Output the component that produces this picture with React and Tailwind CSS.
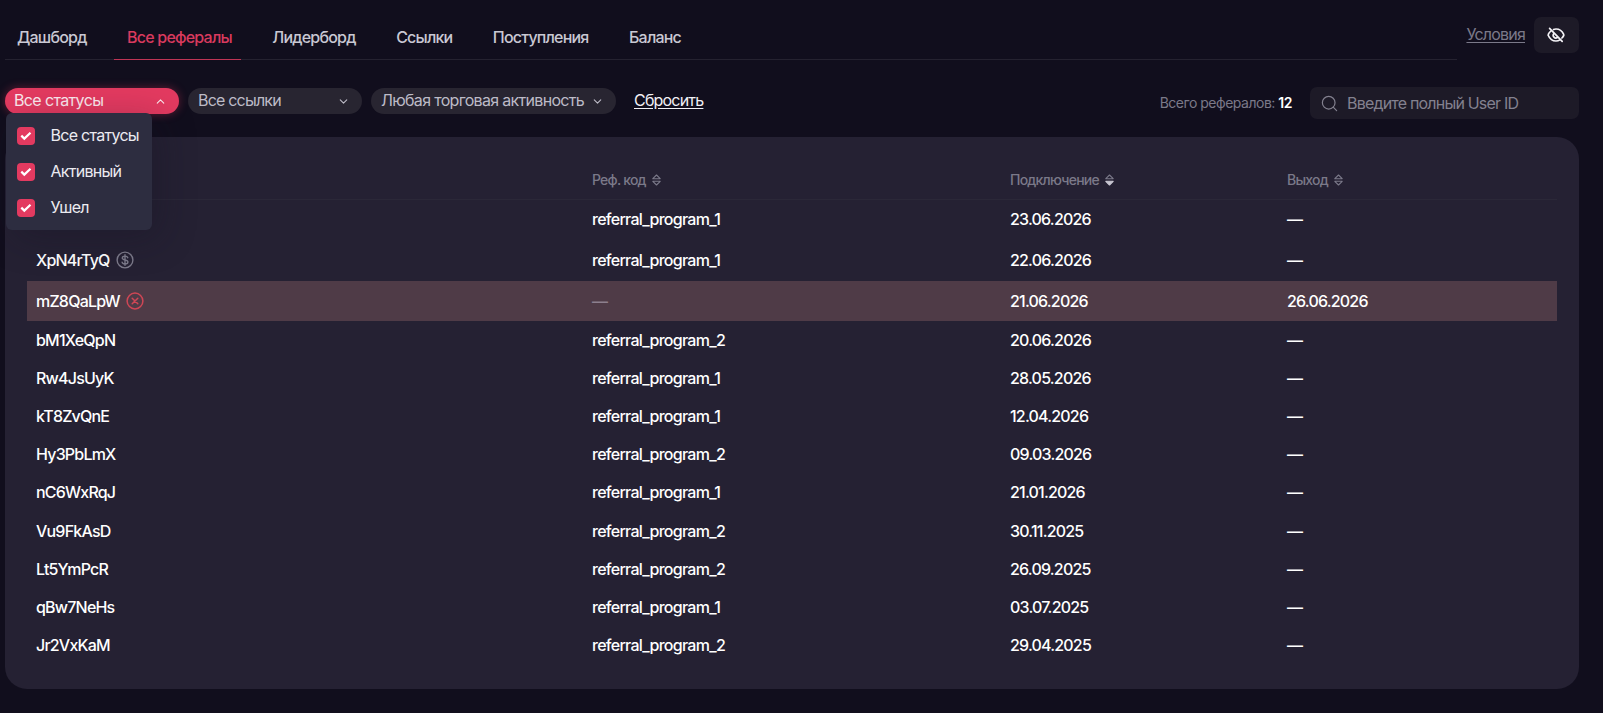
import { ChevronDown, ChevronUp, Search } from "lucide-react";

const tabs = ["Дашборд", "Все рефералы", "Лидерборд", "Ссылки", "Поступления", "Баланс"];

const statuses = ["Все статусы", "Активный", "Ушел"];

const referrals = [
  { id: "", code: "referral_program_1", joined: "23.06.2026", left: null },
  { id: "XpN4rTyQ", code: "referral_program_1", joined: "22.06.2026", left: null, icon: "dollar" },
  { id: "mZ8QaLpW", code: null, joined: "21.06.2026", left: "26.06.2026", icon: "left" },
  { id: "bM1XeQpN", code: "referral_program_2", joined: "20.06.2026", left: null },
  { id: "Rw4JsUyK", code: "referral_program_1", joined: "28.05.2026", left: null },
  { id: "kT8ZvQnE", code: "referral_program_1", joined: "12.04.2026", left: null },
  { id: "Hy3PbLmX", code: "referral_program_2", joined: "09.03.2026", left: null },
  { id: "nC6WxRqJ", code: "referral_program_1", joined: "21.01.2026", left: null },
  { id: "Vu9FkAsD", code: "referral_program_2", joined: "30.11.2025", left: null },
  { id: "Lt5YmPcR", code: "referral_program_2", joined: "26.09.2025", left: null },
  { id: "qBw7NeHs", code: "referral_program_1", joined: "03.07.2025", left: null },
  { id: "Jr2VxKaM", code: "referral_program_2", joined: "29.04.2025", left: null },
];

function SortIcon({ active }) {
  return (
    <svg width="9" height="12" viewBox="0 0 9 12" fill="none" stroke="currentColor" strokeWidth="1.1" strokeLinejoin="round">
      <path d="M4.500 1 8.200 4.700H.8z" />
      <path d="M4.500 11 .8 7.300h7.400z" className={active ? "fill-[#c9c7d2] stroke-[#c9c7d2]" : ""} />
    </svg>
  );
}

function DollarIcon() {
  return (
    <svg width="18" height="18" viewBox="0 0 18 18" fill="none" stroke="#7d7b8b" strokeWidth="1.4" strokeLinecap="round">
      <circle cx="9" cy="9" r="7.9" />
      <path d="M9 3.8v10.4M11.8 6.7c-.3-1-1.3-1.6-2.8-1.6-1.6 0-2.7.7-2.7 1.9 0 2.7 5.6 1.2 5.6 4 0 1.2-1.2 1.9-2.9 1.900-1.600 0-2.700-.7-2.900-1.800" />
    </svg>
  );
}

function LeftIcon() {
  return (
    <svg width="18" height="18" viewBox="0 0 18 18" fill="none" stroke="#cf4655" strokeWidth="1.5" strokeLinecap="round">
      <circle cx="9" cy="9" r="7.9" />
      <path d="m6.200 6.200 5.600 5.600M11.800 6.200l-5.600 5.600" />
    </svg>
  );
}

function EyeOffIcon() {
  return (
    <svg width="18" height="16" viewBox="0 0 18 16" fill="none" stroke="#f4f3f7" strokeWidth="1.7" strokeLinecap="round" strokeLinejoin="round">
      <path d="M6.500 2.500C7.300 2.200 8.100 2 9 2c4 0 6.700 3.200 7.700 5.400.2.400.2.700 0 1.100-.4.800-1 1.700-1.800 2.500" />
      <path d="M3.800 4.200C2.500 5.200 1.700 6.400 1.300 7.400c-.2.400-.2.700 0 1.100C2.300 10.800 5 14 9 14c1.500 0 2.800-.4 3.900-1.100" />
      <path d="M6.700 6.700A2.700 2.700 0 0 0 10.400 10.500" />
      <path d="m2.600 1.400 12.600 13" />
    </svg>
  );
}

function Filter({ label, open, className }) {
  const Icon = open ? ChevronUp : ChevronDown;
  return (
    <button
      className={`flex h-[26px] items-center justify-between rounded-full pr-[12px] ${
        open
          ? "bg-[#e33a60] pl-[9px] text-[#fbe9ee] shadow-[0_0_10px_rgba(227,58,96,0.4)]"
          : "bg-[#282531] pl-[10px] text-[#bdbbc7]"
      } ${className}`}
    >
      <span className="pb-0.5">{label}</span>
      <Icon size={13} strokeWidth={2} />
    </button>
  );
}

function StatusMenu() {
  return (
    <div className="absolute left-px top-[25px] z-10 flex h-[117px] w-[146px] flex-col rounded-[6px] bg-[#2d2d40] pl-[11px] pt-[5px] shadow-[8px_8px_36px_rgba(20,16,34,0.3)]">
      {statuses.map((status) => (
        <label key={status} className="flex h-9 items-center gap-[15.500px] text-[#ecebf1]">
          <span className="flex size-[18px] items-center justify-center rounded-[4px] bg-[#e33a60]">
            <svg width="12" height="10" viewBox="0 0 12 10" fill="none" stroke="#fff" strokeWidth="2.200">
              <path d="m1.300 4.600 3 3L10.500 1.700" />
            </svg>
          </span>
          <span className="pb-0.5 tracking-[-0.045em]">{status}</span>
        </label>
      ))}
    </div>
  );
}

function App() {
  return (
    <div className="h-[713px] overflow-hidden bg-[#110e1d] pl-[5px] pr-6 font-['Inter',sans-serif] text-base tracking-[-0.05em] text-white">
      <div className="flex h-[60px] items-start justify-between">
        <nav className="flex h-[60px] w-[1452px] gap-[18.500px] border-b border-[#252230]">
          {tabs.map((tab) => (
            <div
              key={tab}
              className={`-mb-px flex items-center border-b pl-[13px] pr-[9px] pt-3.5 font-medium first:pl-[12px] ${
                tab === "Все рефералы" ? "border-[#c03455] text-[#d93a5e]" : "border-transparent text-[#c9c8d3]"
              }`}
            >
              {tab}
            </div>
          ))}
        </nav>
        <div className="flex items-center gap-[9px] pt-[17px]">
          <a className="-ml-4 pb-0.5 text-[#7b7989] underline underline-offset-2">Условия</a>
          <button className="flex h-9 w-[45px] items-center justify-center rounded-[7px] bg-[#1d1a27] pr-px">
            <EyeOffIcon />
          </button>
        </div>
      </div>

      <div className="mt-[27px] flex h-8 justify-between">
        <div className="flex items-start gap-[9px] pt-px">
          <div className="relative">
            <Filter label="Все статусы" open className="w-[174px] tracking-[-0.04em]" />
            <StatusMenu />
          </div>
          <Filter label="Все ссылки" className="w-[174px]" />
          <Filter label="Любая торговая активность" className="w-[245px] tracking-[-0.043em]" />
          <a className="ml-[9px] leading-[25px] text-[#f1f0f5] underline underline-offset-2">Сбросить</a>
        </div>
        <div className="flex items-center">
          <p className="mr-[18px] text-sm tracking-[-0.035em] text-[#7b7989]">
            Всего рефералов: <span className="font-semibold text-white">12</span>
          </p>
          <div className="flex h-8 w-[269px] items-center gap-[8px] rounded-[7px] bg-[#1d1a27] pl-[10px] text-[#83818f]">
            <Search size={19} strokeWidth={1.500} />
            <span className="pb-px">Введите полный User ID</span>
          </div>
        </div>
      </div>

      <div className="mt-[18px] h-[552px] rounded-[22px] bg-[#252133] px-[22px] pt-6">
        <table className="w-full table-fixed border-collapse text-left">
          <colgroup>
            <col className="w-[556px]" />
            <col className="w-[418px]" />
            <col className="w-[277px]" />
            <col />
          </colgroup>
          <thead>
            <tr className="h-[38px] border-b border-[#2b2838] text-sm text-[#7b7989]">
              <th className="px-[9px] font-normal" />
              {["Реф. код", "Подключение", "Выход"].map((title) => (
                <th key={title} className="px-[9px] font-medium">
                  <span className="flex items-center gap-[6px] tracking-[-0.055em]">
                    {title}
                    <SortIcon active={title === "Подключение"} />
                  </span>
                </th>
              ))}
            </tr>
          </thead>
          <tbody className="font-medium">
            {referrals.map((row, index) => (
              <tr
                key={row.joined}
                className={`${index < 2 ? "h-[41px]" : index === 2 ? "h-[40px]" : "h-[38.200px]"} ${
                  row.left ? "bg-[#4f3b47]" : ""
                }`}
              >
                <td className="px-[9px] pb-px">
                  <span className="flex items-center gap-[6px]">
                    {row.id}
                    {row.icon === "dollar" && <DollarIcon />}
                    {row.icon === "left" && <LeftIcon />}
                  </span>
                </td>
                <td className="px-[9px] pb-px tracking-[-0.045em]">
                  {row.code || <span className="text-[#8d7f8e]">—</span>}
                </td>
                <td className="px-[9px] pb-px">{row.joined}</td>
                <td className="px-[9px] pb-px">{row.left || "—"}</td>
              </tr>
            ))}
          </tbody>
        </table>
      </div>
    </div>
  );
}

export default App;
